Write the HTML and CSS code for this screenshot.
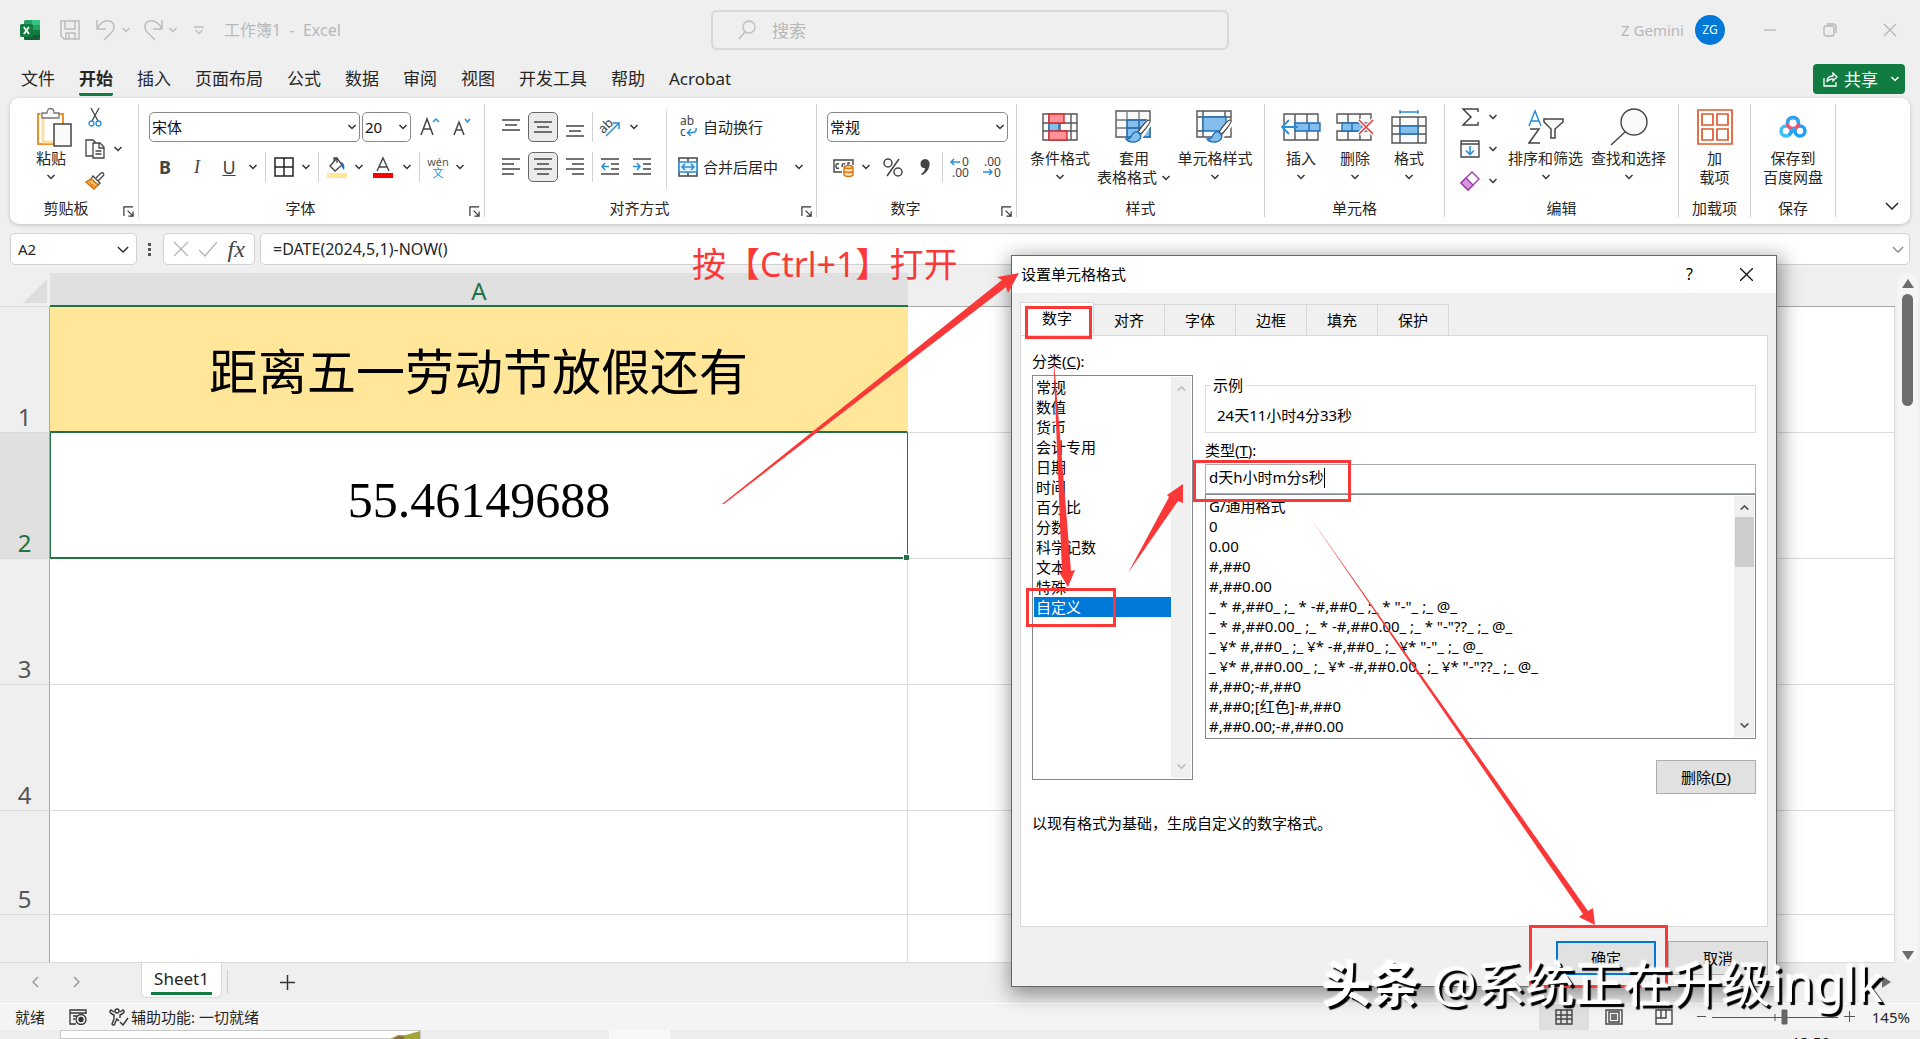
FILE: index.html
```html
<!DOCTYPE html>
<html lang="zh-CN">
<head>
<meta charset="utf-8">
<title>工作簿1 - Excel</title>
<link rel="stylesheet" href="styles.css">
</head>
<body>
<svg class="sprite" aria-hidden="true">
  <symbol id="chev" viewBox="0 0 10 6"><path d="M1.500 1 5 4.500 8.500 1" fill="none" stroke="currentColor" stroke-width="1.500"/></symbol>
  <symbol id="chev-lg" viewBox="0 0 14 8"><path d="M1 1l6 6 6-6" fill="none" stroke="currentColor" stroke-width="1.500"/></symbol>
  <symbol id="launch" viewBox="0 0 12 12"><path d="M1 11V1h10M5 5l6 6M11 6v5H6" fill="none" stroke="#333" stroke-width="1.300"/></symbol>
  <symbol id="brush" viewBox="0 0 30 28"><path d="M27 3c1 1-1 5-9 14l-3-2C21 6 25 2 27 3z" fill="#fff" stroke="#444" stroke-width="1.300"/><path d="M15 15c-4-1-6 2-7 5-1 2-3 2-5 2 3 4 14 5 15-3z" fill="#83beec" stroke="#1e6fb8" stroke-width="1.300"/></symbol>
</svg>
<div class="app">
  <header class="titlebar">
    <div class="quick">
      <svg width="20" height="20" viewBox="0 0 20 20"><rect x="4" width="16" height="20" rx="1.500" fill="#21a366"/><path d="M12 0h6.500A1.500 1.500 0 0 1 20 1.500V5h-8z" fill="#33c481"/><path d="M4 10h16v8.500a1.500 1.500 0 0 1-1.500 1.500h-13A1.500 1.500 0 0 1 4 18.500z" fill="#185c37"/><path d="M12 10h8v5h-8z" fill="#107c41"/><rect y="4" width="13" height="13" rx="1.500" fill="#107c41"/><path d="M3.800 7l5.200 7M9 7l-5.200 7" stroke="#fff" stroke-width="1.800"/></svg>
      <button class="plain q-save" aria-label="保存"><svg width="20" height="20" viewBox="0 0 20 20" fill="none" stroke="#bdbdbd" stroke-width="1.500"><path d="M1 1h18v18H4l-3-3zM5 1v8h10V1M6 19v-6h9v6M9 14v5"/></svg></button>
      <button class="plain" aria-label="撤消"><svg width="20" height="22" viewBox="0 0 20 22" fill="none" stroke="#bdbdbd" stroke-width="1.500"><path d="M1 1v9h9M1 10C4 4 9 1 14 2c5 2 5 8 2 11l-8 8"/></svg></button>
      <svg class="chev" width="10" height="6"><use href="#chev"/></svg>
      <button class="plain q-redo" aria-label="恢复"><svg width="20" height="22" viewBox="0 0 20 22" fill="none" stroke="#bdbdbd" stroke-width="1.500"><path d="M19 1v9h-9M19 10C16 4 11 1 6 2c-5 2-5 8-2 11l8 8"/></svg></button>
      <svg class="chev" width="10" height="6"><use href="#chev"/></svg>
      <svg class="q-more" width="10" height="9" viewBox="0 0 10 9" fill="none" stroke="#bdbdbd" stroke-width="1.300"><path d="M0 1h10M1.500 4 5 7.500 8.500 4"/></svg>
      <h1>工作簿1 &nbsp;- &nbsp;Excel</h1>
    </div>
    <label class="search"><svg width="18" height="20" viewBox="0 0 18 20" fill="none" stroke="#bdbdbd" stroke-width="1.300"><circle cx="11" cy="7" r="6"/><path d="M7 12l-6 7"/></svg><input type="text" placeholder="搜索" aria-label="搜索"></label>
    <div class="account">
      <span class="user">Z Gemini</span><span class="avatar">ZG</span>
      <button class="plain win" aria-label="最小化"><svg width="14" height="14" viewBox="0 0 14 14"><path d="M1 7h12" stroke="#b5b5b5" stroke-width="1.300"/></svg></button>
      <button class="plain win" aria-label="还原"><svg width="14" height="14" viewBox="0 0 14 14" fill="none" stroke="#b5b5b5" stroke-width="1.300"><rect x="1" y="3" width="10" height="10" rx="2"/><path d="M4 1h6a3 3 0 0 1 3 3v6"/></svg></button>
      <button class="plain win" aria-label="关闭"><svg width="14" height="14" viewBox="0 0 14 14" stroke="#b5b5b5" stroke-width="1.300"><path d="M1 1l12 12M13 1L1 13"/></svg></button>
    </div>
  </header>

  <nav class="menu">
    <a href="#">文件</a><a href="#" class="current">开始</a><a href="#">插入</a><a href="#">页面布局</a><a href="#">公式</a><a href="#">数据</a><a href="#">审阅</a><a href="#">视图</a><a href="#">开发工具</a><a href="#">帮助</a><a href="#">Acrobat</a>
    <button class="share"><svg width="15" height="15" viewBox="0 0 15 15" fill="none" stroke="#fff" stroke-width="1.300"><path d="M1 6v8h12V10M4 10c0-4 2-6 6-6V1l4 4-4 4V7C7 7 5 8 4 10z"/></svg>共享<svg class="chev" width="10" height="6"><use href="#chev"/></svg></button>
  </nav>

  <section class="ribbon">
    <div class="group g-clip">
      <div class="body">
        <button class="big b-paste"><span class="ico"><svg width="42" height="40" viewBox="-6 0 42 40"><rect x="2" y="7" width="25" height="30" fill="#fff" stroke="#e8912d" stroke-width="2"/><path d="M4 8h3v27h11" fill="none" stroke="#fbe0a8" stroke-width="3"/><path d="M6 11V6h5c0-6 7-6 7 0h5v5z" fill="#fafafa" stroke="#777" stroke-width="1.300"/><rect x="18" y="17" width="17" height="22" fill="#fafafa" stroke="#444" stroke-width="1.500"/></svg></span>粘贴<svg class="chev" width="10" height="6"><use href="#chev"/></svg></button>
        <div class="tools">
          <div class="row"><button class="ib" aria-label="剪切"><svg width="14" height="20" viewBox="0 0 14 20" fill="none" stroke="#444" stroke-width="1.300"><path d="M3 1l7 13M11 1L4 14"/><g stroke="#2b8fd6"><circle cx="3.500" cy="16.500" r="2.500"/><circle cx="10.500" cy="16.500" r="2.500"/></g></svg></button></div>
          <div class="row"><button class="ib" aria-label="复制"><svg width="20" height="20" viewBox="0 0 20 20" fill="#fff" stroke="#444" stroke-width="1.300"><path d="M8 17H1V1h7l3 3"/><path d="M8 4h7l4 4v11H8zM14 4v5h5M10.500 12h6M10.500 15h6"/></svg></button><svg class="chev" width="10" height="6"><use href="#chev"/></svg></div>
          <div class="row"><button class="ib" aria-label="格式刷"><svg width="20" height="18" viewBox="0 0 20 18"><path d="M11 6l5-5c2-1 4 1 2 3l-5 5" fill="#fff" stroke="#444" stroke-width="1.300"/><path d="M8 4l7 7-2 2-7-6z" fill="#fff" stroke="#444" stroke-width="1.300"/><path d="M6 7L1 10l8 7 4-4z" fill="#f9c16b" stroke="#d9730d" stroke-width="1.500"/><path d="M4 9l5 8M7 12l4 3" stroke="#d9730d"/></svg></button></div>
        </div>
      </div>
      <div class="foot"><span>剪贴板</span><svg width="11" height="11"><use href="#launch"/></svg></div>
    </div>

    <div class="group g-font">
      <div class="body two">
        <div class="row">
          <label class="combo c-font"><select aria-label="字体"><option>宋体</option></select><svg class="chev" width="10" height="6"><use href="#chev"/></svg></label>
          <label class="combo c-size"><select aria-label="字号"><option>20</option></select><svg class="chev" width="10" height="6"><use href="#chev"/></svg></label>
          <button class="ib" aria-label="增大字号"><svg width="20" height="20" viewBox="0 0 20 20" fill="none" stroke="#444" stroke-width="1.500"><path d="M1 18L7 2l6 16M3 12h8"/><path d="M13 5l3-3 3 3" stroke="#2b8fd6"/></svg></button>
          <button class="ib" aria-label="减小字号"><svg width="18" height="20" viewBox="0 0 18 20" fill="none" stroke="#444" stroke-width="1.500"><path d="M1 18L6 5l5 13M3 13h6"/><path d="M12 2l2.500 3L17 2" stroke="#2b8fd6"/></svg></button>
        </div>
        <div class="row">
          <button class="ib tx"><b>B</b></button><button class="ib tx"><i>I</i></button><button class="ib tx"><u>U</u></button><svg class="chev" width="10" height="6"><use href="#chev"/></svg>
          <span class="sep"></span>
          <button class="ib n" aria-label="边框"><svg width="20" height="20" viewBox="0 0 20 20" fill="none" stroke="#222" stroke-width="1.500"><path d="M1 1h18v18H1zM10 1v18M1 10h18"/></svg></button><svg class="chev" width="10" height="6"><use href="#chev"/></svg>
          <span class="sep"></span>
          <button class="ib n" aria-label="填充颜色"><svg width="22" height="21" viewBox="0 0 22 21"><path d="M4 9l7-8 5 7-7 6zM8 5V1h3v5" fill="#fff" stroke="#444" stroke-width="1.300"/><path d="M15 5c3 1 4 4 3 8-2-2-3-4-3-8z" fill="#1e6fb8"/><rect x="1" y="16" width="20" height="5" fill="#ffe699"/></svg></button><svg class="chev" width="10" height="6"><use href="#chev"/></svg>
          <button class="ib" aria-label="字体颜色"><svg width="20" height="21" viewBox="0 0 20 21"><path d="M4 14L10 1l6 13M6 10h8" fill="none" stroke="#444" stroke-width="1.400"/><rect y="16" width="20" height="5" fill="red"/></svg></button><svg class="chev" width="10" height="6"><use href="#chev"/></svg>
          <span class="sep"></span>
          <button class="ib n wen">wén<span>文</span></button><svg class="chev" width="10" height="6"><use href="#chev"/></svg>
        </div>
      </div>
      <div class="foot"><span>字体</span><svg width="11" height="11"><use href="#launch"/></svg></div>
    </div>

    <div class="group g-align">
      <div class="body">
        <div class="two left">
          <div class="row">
            <button class="ib" aria-label="顶端对齐"><svg width="18" height="20" viewBox="0 0 18 20" stroke="#444" stroke-width="1.500"><path d="M0 3h18M3 8h12M0 13h18"/></svg></button>
            <button class="ib on" aria-label="垂直居中"><svg width="18" height="20" viewBox="0 0 18 20" stroke="#444" stroke-width="1.500"><path d="M0 5h18M3 10h12M0 15h18"/></svg></button>
            <button class="ib" aria-label="底端对齐"><svg width="18" height="20" viewBox="0 0 18 20" stroke="#444" stroke-width="1.500"><path d="M0 9h18M3 14h12M0 19h18"/></svg></button>
            <span class="sep thin"></span>
            <button class="ib" aria-label="方向"><svg width="22" height="20" viewBox="0 0 22 20" fill="none"><text x="0" y="15" font-size="13" fill="#444" transform="rotate(-45 5 11)">ab</text><path d="M7 19L20 6M14 6h6v6" stroke="#2b8fd6" stroke-width="1.500"/></svg></button><svg class="chev" width="10" height="6"><use href="#chev"/></svg>
          </div>
          <div class="row">
            <button class="ib" aria-label="左对齐"><svg width="18" height="18" viewBox="0 0 18 18" stroke="#444" stroke-width="1.500"><path d="M0 1h18M0 6h12M0 11h18M0 16h12"/></svg></button>
            <button class="ib on" aria-label="居中"><svg width="18" height="18" viewBox="0 0 18 18" stroke="#444" stroke-width="1.500"><path d="M0 1h18M3 6h12M0 11h18M3 16h12"/></svg></button>
            <button class="ib" aria-label="右对齐"><svg width="18" height="18" viewBox="0 0 18 18" stroke="#444" stroke-width="1.500"><path d="M0 1h18M6 6h12M0 11h18M6 16h12"/></svg></button>
            <span class="sep thin"></span>
            <button class="ib" aria-label="减少缩进量"><svg width="18" height="18" viewBox="0 0 18 18" fill="none" stroke="#444" stroke-width="1.500"><path d="M0 1h18M10 6h8M10 11h8M0 16h18"/><path d="M8 8.500H1M4 5L1 8.500 4 12" stroke="#2b8fd6"/></svg></button>
            <button class="ib" aria-label="增加缩进量"><svg width="18" height="18" viewBox="0 0 18 18" fill="none" stroke="#444" stroke-width="1.500"><path d="M0 1h18M10 6h8M10 11h8M0 16h18"/><path d="M0 8.500h7M4 5l3 3.500L4 12" stroke="#2b8fd6"/></svg></button>
          </div>
        </div>
        <span class="sep tall"></span>
        <div class="two">
          <button class="wide"><svg width="20" height="20" viewBox="0 0 20 20" fill="none"><text x="2" y="8" font-size="12" fill="#444">ab</text><text x="2" y="19" font-size="12" fill="#444">c</text><path d="M18 11c1 4-2 5-8 5M13 12l-3.500 4 3.500 3" stroke="#2b8fd6" stroke-width="1.500"/></svg>自动换行</button>
          <button class="wide"><svg width="20" height="20" viewBox="0 0 20 20" fill="none" stroke="#444" stroke-width="1.500"><path d="M1 1h18v18H1zM10 1v4M10 15v4"/><path d="M1 5h18v10H1z" fill="#e5f2fb" stroke="#2b8fd6"/><path d="M4 10h12M7 7l-3 3 3 3M13 7l3 3-3 3" stroke="#2b8fd6"/></svg>合并后居中<svg class="chev" width="10" height="6"><use href="#chev"/></svg></button>
        </div>
      </div>
      <div class="foot"><span>对齐方式</span><svg width="11" height="11"><use href="#launch"/></svg></div>
    </div>

    <div class="group g-num">
      <div class="body two">
        <div class="row"><label class="combo c-num"><select aria-label="数字格式"><option>常规</option></select><svg class="chev" width="10" height="6"><use href="#chev"/></svg></label></div>
        <div class="row">
          <button class="ib" aria-label="会计数字格式"><svg width="21" height="19" viewBox="0 0 21 19" fill="none" stroke="#444" stroke-width="1.400"><path d="M9 14H1V2h19v5M6 6c-2-1-3 0-3 2s1 3 3 2M12 6c-2-1-3 0-3 3M15 7V5h2"/><path d="M11 9v8c1 2 8 2 9 0V9c-1-2-8-2-9 0c1 2 8 2 9 0M11 13c1 2 8 2 9 0" fill="#fde3bd" stroke="#d9730d"/></svg></button><svg class="chev" width="10" height="6"><use href="#chev"/></svg>
          <button class="ib pct" aria-label="百分比样式"><svg width="20" height="19" viewBox="0 0 20 19" fill="none" stroke="#444" stroke-width="1.500"><circle cx="5" cy="5" r="4"/><circle cx="15" cy="14" r="4"/><path d="M16 1L4 18"/></svg></button>
          <button class="ib" aria-label="千位分隔样式"><svg width="10" height="18" viewBox="0 0 10 18"><path d="M5 1c7 0 6 12-3 16l-1-1c3-2 4-4 4-6C-1 11-1 1 5 1z" fill="#444"/></svg></button>
          <span class="sep thin"></span>
          <button class="ib" aria-label="增加小数位数"><svg width="20" height="21" viewBox="0 0 20 21"><text x="12" y="9" font-size="12" fill="#444">0</text><text x="2" y="20" font-size="12" fill="#444">.00</text><path d="M10 5H1M4 2L1 5l3 3" fill="none" stroke="#2b8fd6" stroke-width="1.500"/></svg></button>
          <button class="ib" aria-label="减少小数位数"><svg width="20" height="21" viewBox="0 0 20 21"><text x="2" y="9" font-size="12" fill="#444">.00</text><text x="12" y="20" font-size="12" fill="#444">0</text><path d="M1 15h9M7 12l3 3-3 3" fill="none" stroke="#2b8fd6" stroke-width="1.500"/></svg></button>
        </div>
      </div>
      <div class="foot"><span>数字</span><svg width="11" height="11"><use href="#launch"/></svg></div>
    </div>

    <div class="group g-style">
      <div class="body">
        <button class="big"><span class="ico"><svg width="36" height="28" viewBox="0 0 36 28" fill="#fafafa" stroke="#555" stroke-width="1.400"><path d="M1 1h34v26H1zM7 1v26M29 1v26M18 1v26M1 10h34M1 18h34"/><path d="M7 10h10v8H7z" fill="#83beec" stroke="#1e6fb8"/><path d="M7 1h15v9H7zM7 18h18v9H7z" fill="#ff9199" stroke="#d92b2b"/></svg></span>条件格式<svg class="chev" width="10" height="6"><use href="#chev"/></svg></button>
        <button class="big"><span class="ico"><svg width="38" height="34" viewBox="0 0 38 34"><path d="M1 1h34v26H1z" fill="#fafafa" stroke="#555" stroke-width="1.400"/><path d="M12 10h23v17H12z" fill="#83beec"/><path d="M12 1v26M24 1v26M1 10h34M1 18h34" stroke="#777" stroke-width="1.300"/><path d="M12 10h23M12 10v17h23V10M12 18h23M24 10v17" fill="none" stroke="#1e6fb8" stroke-width="1.300"/><path d="M36 10L24 27l-6 6" stroke="#fff" stroke-width="7"/><use href="#brush" x="8" y="7" width="30" height="28"/></svg></span>套用<span class="line">表格格式 <svg class="chev" width="10" height="6"><use href="#chev"/></svg></span></button>
        <button class="big wider"><span class="ico"><svg width="38" height="34" viewBox="0 0 38 34"><path d="M1 1h34v26H1zM7 1v26M29 1v6M1 7h34M1 21h7" fill="#fafafa" stroke="#555" stroke-width="1.400"/><path d="M7 7h23v14H7z" fill="#83beec" stroke="#1e6fb8" stroke-width="1.400"/><path d="M36 10L24 27l-6 6" stroke="#fff" stroke-width="7"/><use href="#brush" x="8" y="7" width="30" height="28"/></svg></span>单元格样式<svg class="chev" width="10" height="6"><use href="#chev"/></svg></button>
      </div>
      <div class="foot"><span>样式</span></div>
    </div>

    <div class="group g-cell">
      <div class="body">
        <button class="big"><span class="ico"><svg width="40" height="28" viewBox="0 0 40 28" fill="#fafafa" stroke="#555" stroke-width="1.400"><path d="M3 1h34v26H3zM14 1v26M26 1v26"/><path d="M14 10h25v8H14zM28 10v8" fill="#83beec" stroke="#1e6fb8"/><path d="M17 14H1M8 7l-7 7 7 7" fill="none" stroke="#2b8fd6" stroke-width="1.800"/></svg></span>插入<svg class="chev" width="10" height="6"><use href="#chev"/></svg></button>
        <button class="big"><span class="ico"><svg width="38" height="28" viewBox="0 0 38 28" fill="#fafafa" stroke="#555" stroke-width="1.400"><path d="M1 10V1h34v9H1zM1 18h34v9H1zM12 1v9M24 1v9M12 18v9M24 18v9"/><path d="M6 10h20v8H6zM16 10v8" fill="#83beec" stroke="#1e6fb8"/><path d="M23 7l14 14M37 7L23 21" stroke="#fff" stroke-width="4"/><path d="M23 7l14 14M37 7L23 21" stroke="#e8373e" stroke-width="1.600"/></svg></span>删除<svg class="chev" width="10" height="6"><use href="#chev"/></svg></button>
        <button class="big"><span class="ico tallico"><svg width="36" height="36" viewBox="0 0 36 36" fill="#fafafa" stroke="#555" stroke-width="1.400"><path d="M1 8h34v26H1zM9 8v26M27 8v26M1 17h34M1 25h34"/><path d="M9 17h18v8H9z" fill="#83beec" stroke="#1e6fb8"/><path d="M9 3h18M9 1v4M27 1v4" stroke="#2b8fd6"/></svg></span>格式<svg class="chev" width="10" height="6"><use href="#chev"/></svg></button>
      </div>
      <div class="foot"><span>单元格</span></div>
    </div>

    <div class="group g-edit">
      <div class="body">
        <div class="tools">
          <div class="row"><button class="ib" aria-label="自动求和"><svg width="18" height="18" viewBox="0 0 18 18" fill="none" stroke="#444" stroke-width="1.500"><path d="M17 4V1H2l8 8-8 8h15v-3"/></svg></button><svg class="chev" width="10" height="6"><use href="#chev"/></svg></div>
          <div class="row"><button class="ib" aria-label="填充"><svg width="20" height="18" viewBox="0 0 20 18" fill="#fafafa" stroke="#444" stroke-width="1.400"><path d="M1 1h18v16H1zM1 4h18"/><path d="M10 6v8M6 10.500l4 4 4-4" fill="none" stroke="#2b8fd6" stroke-width="1.600"/></svg></button><svg class="chev" width="10" height="6"><use href="#chev"/></svg></div>
          <div class="row"><button class="ib" aria-label="清除"><svg width="20" height="20" viewBox="0 0 20 20" fill="#fff" stroke="#a03bab" stroke-width="1.400"><path d="M1 12L12 1l7 7L8 19z"/><path d="M1 12l5-5 7 7-5 5z" fill="#d896dd"/></svg></button><svg class="chev" width="10" height="6"><use href="#chev"/></svg></div>
        </div>
        <button class="big wider"><span class="ico"><svg width="36" height="36" viewBox="0 0 36 36" fill="none" stroke="#444" stroke-width="1.500"><path d="M1 17L7 2l6 15M3 12h8" stroke="#2b8fd6"/><path d="M2 20h9L1 34h11"/><path d="M16 10h19v3l-8 7v9h-4v-9l-7-7z" fill="#fafafa"/></svg></span>排序和筛选<svg class="chev" width="10" height="6"><use href="#chev"/></svg></button>
        <button class="big wider"><span class="ico"><svg width="38" height="38" viewBox="0 0 38 38" fill="none" stroke="#444" stroke-width="1.400"><circle cx="24" cy="14" r="13" fill="#fafafa"/><path d="M15 24L1 37"/></svg></span>查找和选择<svg class="chev" width="10" height="6"><use href="#chev"/></svg></button>
      </div>
      <div class="foot"><span>编辑</span></div>
    </div>

    <div class="group g-add">
      <div class="body"><button class="big"><span class="ico"><svg width="36" height="36" viewBox="0 0 36 36" fill="none" stroke="#dd5a2b" stroke-width="1.700"><path d="M1 1h34v34H1zM5 5h11v11H5zM20 5h11v11H20zM5 20h11v11H5zM20 20h11v11H20z"/></svg></span>加<span class="line">载项</span></button></div>
      <div class="foot"><span>加载项</span></div>
    </div>
    <div class="group g-save">
      <div class="body"><button class="big"><span class="ico"><svg width="28" height="24" viewBox="0 0 28 24" fill="none" stroke-width="3.500"><circle cx="7" cy="16" r="5" stroke="#3cc0f5"/><circle cx="21" cy="16" r="5" stroke="#1fa0f5"/><circle cx="14" cy="8" r="5.500" stroke="#f5506e"/><path d="M8.500 8a5.500 5.500 0 0 1 11 0M10 20l6-7" stroke="#2aa8f5"/></svg></span>保存到<span class="line">百度网盘</span></button></div>
      <div class="foot"><span>保存</span></div>
    </div>
    <button class="plain collapse" aria-label="折叠功能区"><svg width="14" height="8"><use href="#chev-lg"/></svg></button>
  </section>

  <section class="formulabar">
    <div class="box namebox"><input type="text" value="A2" aria-label="名称框"><svg width="12" height="7"><use href="#chev-lg"/></svg></div>
    <svg class="dots" width="4" height="14" viewBox="0 0 4 14" fill="#555"><path d="M0 0h3v3H0zM0 5h3v3H0zM0 10h3v3H0z"/></svg>
    <div class="box fxbox">
      <button class="plain" aria-label="取消输入"><svg width="16" height="16" viewBox="0 0 16 16" stroke="#b5b5b5" stroke-width="1.300"><path d="M1 1l14 14M15 1L1 15"/></svg></button>
      <button class="plain" aria-label="输入"><svg width="20" height="16" viewBox="0 0 20 16" fill="none" stroke="#b5b5b5" stroke-width="1.300"><path d="M1 9l6 6L19 1"/></svg></button>
      <button class="plain fx">fx</button>
    </div>
    <div class="box formula"><input type="text" value="=DATE(2024,5,1)-NOW()" aria-label="编辑栏"><svg width="12" height="7"><use href="#chev-lg"/></svg></div>
  </section>

  <main class="sheetarea">
    <table class="sheet">
      <thead><tr><th class="corner"><svg width="26" height="26" viewBox="0 0 26 26"><path d="M25 1v24H1z" fill="#dedede"/></svg></th><th class="col">A</th><th></th></tr></thead>
      <tbody>
        <tr class="tallrow"><th>1</th><td class="head">距离五一劳动节放假还有</td><td></td></tr>
        <tr class="tallrow"><th class="sel">2</th><td class="active">55.46149688</td><td></td></tr>
        <tr class="tallrow"><th>3</th><td></td><td></td></tr>
        <tr class="tallrow"><th>4</th><td></td><td></td></tr>
        <tr class="midrow"><th>5</th><td></td><td></td></tr>
        <tr class="last"><th></th><td></td><td></td></tr>
      </tbody>
    </table>
    <div class="vscroll"><svg width="12" height="9" viewBox="0 0 12 9"><path d="M6 0l6 9H0z" fill="#6e6e6e"/></svg><span class="thumb"></span><svg class="down" width="12" height="9" viewBox="0 0 12 9"><path d="M0 0h12L6 9z" fill="#6e6e6e"/></svg></div>
  </main>

  <footer>
    <div class="tabs">
      <button class="plain nav" aria-label="上一张"><svg width="7" height="12" viewBox="0 0 7 12" fill="none" stroke="#999" stroke-width="1.500"><path d="M6 1L1 6l5 5"/></svg></button>
      <button class="plain nav" aria-label="下一张"><svg width="7" height="12" viewBox="0 0 7 12" fill="none" stroke="#999" stroke-width="1.500"><path d="M1 1l5 5-5 5"/></svg></button>
      <button class="sheettab"><span>Sheet1</span></button>
      <span class="tabsep"></span>
      <button class="plain add" aria-label="新工作表"><svg width="15" height="15" viewBox="0 0 15 15" stroke="#333" stroke-width="1.500"><path d="M7.500 0v15M0 7.500h15"/></svg></button>
      <svg class="hright" width="9" height="12" viewBox="0 0 9 12"><path d="M0 0l9 6-9 6z" fill="#6e6e6e"/></svg>
    </div>
    <div class="status">
      <span>就绪</span>
      <svg class="macro" width="18" height="16" viewBox="0 0 18 16" fill="none" stroke="#333" stroke-width="1.300"><path d="M7 15H1V1h16v4M1 4h16M4 7h4M4 10h2"/><circle cx="12" cy="10.500" r="5"/><circle cx="12" cy="10.500" r="2" fill="#333"/></svg>
      <svg class="acc" width="20" height="18" viewBox="0 0 20 18" fill="none" stroke="#333" stroke-width="1.400"><circle cx="8" cy="3" r="2"/><path d="M5 4L2 2C0 3 1 5 3 6l2 1v4l-2 5c1 2 3 1 3-1l2-4 2 2M11 4l3-2c2 1 1 3-1 4l-2 1v3M11 14l3 3 5-7"/></svg>
      <span>辅助功能: 一切就绪</span>
      <div class="zoom">
        <button class="view on" aria-label="普通"><svg width="18" height="16" viewBox="0 0 18 16" fill="none" stroke="#444" stroke-width="1.400"><path d="M1 1h16v14H1zM6 1v14M12 1v14M1 6h16M1 10h16"/></svg></button>
        <button class="view" aria-label="页面布局"><svg width="18" height="16" viewBox="0 0 18 16" fill="none" stroke="#444" stroke-width="1.400"><path d="M1 1h16v14H1zM4 3h10v10H4zM6 6h6M6 8h6M6 10h6"/></svg></button>
        <button class="view" aria-label="分页预览"><svg width="18" height="16" viewBox="0 0 18 16" fill="none" stroke="#444" stroke-width="1.400"><path d="M1 1h16v14H1zM1 9h10V1M6 1v8"/></svg></button>
        <svg class="slider" width="158" height="16" viewBox="0 0 158 16" fill="none" stroke="#555"><path d="M0 7.500h9M15 8.500h126M78 5v7M147 7.500h11M152.500 2v11"/><path d="M85 1h5v14h-5z" fill="#666" stroke="#666"/></svg>
        <span>145%</span>
      </div>
    </div>
    <div class="taskbar"><span class="preview"><svg width="30" height="8" viewBox="0 0 30 8"><path d="M0 8l8-4 8 0 14-4v8z" fill="#a3a53c"/><path d="M3 8l6-3 6 1-2 2z" fill="#8a6a4a"/></svg></span><span class="task"></span><span class="clock">13:59</span></div>
  </footer>

  <div class="dialog" role="dialog" aria-label="设置单元格格式">
    <div class="dtitle"><span>设置单元格格式</span><button class="plain help">?</button><button class="plain" aria-label="关闭"><svg width="13" height="13" viewBox="0 0 13 13" stroke="#111" stroke-width="1.300"><path d="M0 0l13 13M13 0L0 13"/></svg></button></div>
    <div class="dbody">
      <div class="dtabs"><button class="cur">数字</button><button>对齐</button><button>字体</button><button>边框</button><button>填充</button><button>保护</button></div>
      <div class="panel">
        <div class="cols">
          <div class="cat">
            <span class="lbl" id="cat">分类(<u>C</u>):</span>
            <div class="listbox">
              <ul role="listbox" aria-labelledby="cat"><li>常规</li><li>数值</li><li>货币</li><li>会计专用</li><li>日期</li><li>时间</li><li>百分比</li><li>分数</li><li>科学记数</li><li>文本</li><li>特殊</li><li class="sel">自定义</li></ul>
              <div class="sb off"><svg class="up" width="11" height="7"><use href="#chev"/></svg><svg width="11" height="7"><use href="#chev"/></svg></div>
            </div>
          </div>
          <div class="detail">
            <fieldset><legend>示例</legend>24天11小时4分33秒</fieldset>
            <label class="lbl" for="type">类型(<u>T</u>):</label>
            <div class="typebox"><input type="text" id="type" value="d天h小时m分s秒"></div>
            <div class="listbox formats">
              <ul role="listbox" aria-label="类型"><li>G/通用格式</li><li>0</li><li>0.00</li><li>#,##0</li><li>#,##0.00</li><li>_ * #,##0_ ;_ * -#,##0_ ;_ * "-"_ ;_ @_ </li><li>_ * #,##0.00_ ;_ * -#,##0.00_ ;_ * "-"??_ ;_ @_ </li><li>_ ¥* #,##0_ ;_ ¥* -#,##0_ ;_ ¥* "-"_ ;_ @_ </li><li>_ ¥* #,##0.00_ ;_ ¥* -#,##0.00_ ;_ ¥* "-"??_ ;_ @_ </li><li>#,##0;-#,##0</li><li>#,##0;[红色]-#,##0</li><li>#,##0.00;-#,##0.00</li></ul>
              <div class="sb"><svg class="up" width="11" height="7"><use href="#chev"/></svg><span class="sbthumb"></span><svg width="11" height="7"><use href="#chev"/></svg></div>
            </div>
            <button class="btn del">删除(<u>D</u>)</button>
          </div>
        </div>
        <p>以现有格式为基础，生成自定义的数字格式。</p>
      </div>
      <div class="actions"><button class="btn ok">确定</button><button class="btn">取消</button></div>
    </div>
  </div>

  <div class="note">按【Ctrl+1】打开</div>
  <svg class="marks" width="1920" height="1039" viewBox="0 0 1920 1039" fill="#fb3838" aria-hidden="true">
    <rect x="1324" y="468" width="1" height="20" fill="#000"/>
    <path d="M722 504L1002 280L997 277L1019 273L1008 293L1006 287L724 504z"/>
    <path d="M1053 349L1062 572L1059 572L1068 587L1075 570L1071 571z"/>
    <path d="M1128 573L1169 497L1167 495L1183 484L1183 503L1178 501z"/>
    <path d="M1309 516L1588 911L1593 908L1595 925L1579 917L1583 914z"/>
    <g fill="none" stroke="#fb3838" stroke-width="3"><rect x="1026.500" y="307.500" width="64" height="30"/><rect x="1027.500" y="589.500" width="87" height="36"/><rect x="1194.500" y="461.500" width="155" height="39"/><rect x="1530.500" y="926.500" width="136" height="60"/></g>
  </svg>
  <div class="watermark"><b>头条</b> @系统正在升级inglk</div>
</div>
</body>
</html>
```
FILE: styles.css
```css
* { box-sizing: border-box; }
body {
  margin: 0;
  background: #efefef;
  color: #262626;
  font: 15px/19px "Noto Sans", "Noto Sans CJK SC", sans-serif;
}
button, input, select { font: inherit; color: inherit; margin: 0; padding: 0; border: 0; background: none; }
input, select { outline: 0; min-width: 0; appearance: none; }
svg { display: block; flex: none; }
ul { margin: 0; padding: 0; list-style: none; }
.sprite { position: absolute; width: 0; height: 0; }
.app { position: relative; min-height: 100vh; display: flex; flex-direction: column; overflow: hidden; }
.plain { display: flex; align-items: center; justify-content: center; }

.titlebar { height: 60px; display: grid; grid-template-columns: 1fr 518px 1fr; align-items: center; color: #b8b8b8; font-size: 16px; }
.quick { display: flex; align-items: center; padding-left: 20px; }
.q-save { margin: 0 16px 0 20px; }
.quick .chev { margin-left: 5px; }
.q-redo { margin-left: 12px; }
.q-more { margin: 0 20px 0 16px; }
.titlebar h1 { margin: 0; font-size: 16px; font-weight: 400; white-space: nowrap; }
.search { height: 40px; border: 2px solid #d8d8d8; border-radius: 6px; display: flex; align-items: center; gap: 16px; padding-left: 25px; margin-left: 10px; margin-right: -10px; }
.search input { flex: 1; font-size: 17px; }
.search input::placeholder { color: #b8b8b8; opacity: 1; }
.account { display: flex; align-items: center; justify-content: flex-end; }
.user { font-size: 15px; }
.avatar { width: 30px; height: 30px; border-radius: 50%; background: #0078d7; color: #fff; font-size: 12px; line-height: 30px; text-align: center; margin: 0 15px 0 11px; }
.win { width: 60px; height: 40px; }

.menu { height: 38px; display: flex; align-items: center; padding: 0 15px 0 9px; }
.menu a { color: inherit; text-decoration: none; font-size: 17px; line-height: 28px; margin: 2px 12px 0; border-bottom: 3px solid transparent; }
.menu .current { font-weight: 700; border-color: #107c41; border-radius: 2px; }
.share { margin-left: auto; width: 92px; height: 30px; border-radius: 4px; background: #107c41; color: #fff; font-size: 17px; display: flex; align-items: center; gap: 6px; padding-left: 10px; }
.share .chev { color: #fff; margin-left: 6px; }

.ribbon { margin: 0 10px; height: 126px; border-radius: 9px; background: #fff; box-shadow: 0 1px 4px #0003; display: flex; }
.group { margin: 6px 0 7px; border-right: 1px solid #d1d1d1; display: flex; flex-direction: column; flex: none; }
.body { flex: 1; display: flex; align-items: flex-start; }
.foot { position: relative; height: 17px; line-height: 17px; text-align: center; }
.foot svg { position: absolute; right: 4px; bottom: 0; }
.g-clip { width: 129px; }
.g-font { width: 346px; }
.g-align { width: 332px; }
.g-num { width: 200px; }
.g-style { width: 248px; }
.g-cell { width: 180px; }
.g-edit { width: 234px; }
.g-add { width: 72px; }
.g-save { width: 85px; }
.g-clip .foot { padding-right: 16px; }
.g-font .foot, .g-align .foot, .g-num .foot { padding-right: 22px; }
.chev { color: #333; }
.quick .chev { color: #bdbdbd; }
.two { display: flex; flex-direction: column; align-items: flex-start; gap: 10px; padding: 8px 0 0 10px; }
.row { display: flex; align-items: center; height: 30px; }
.tools { margin-top: -3px; }
.tools .row { height: 32px; }
.g-edit .tools { padding: 0 6px 0 9px; }
.tools .chev { margin-left: 2px; }
.ib { width: 32px; height: 30px; display: flex; align-items: center; justify-content: center; flex: none; }
.ib svg, .wide svg { overflow: visible; }
.ib.n { width: 28px; }
.ib.on { border: 1px solid #666; border-radius: 5px; background: #ebebeb; width: 30px; margin: 0 1px; }
.tx { font-size: 18px; color: #444; }
.tx i { font-family: "Liberation Serif", serif; }
.two .chev { margin: 0 3px; }
.sep { width: 1px; height: 30px; background: #d1d1d1; margin: 0 4px; flex: none; }
.sep.thin { margin: 0 1px; }
.sep.tall { height: 78px; margin: 7px 1px 0 8px; }
.wen { flex-direction: column; font-size: 11px; line-height: 11px; color: #555; }
.wen span { color: #2b8fd6; }
.combo { height: 30px; border: 1px solid #888; border-radius: 5px; display: flex; align-items: center; }
.combo select { flex: 1; height: 28px; padding-left: 2px; color: #111; }
.two .combo .chev { margin: 0 2px; }
.c-font { width: 211px; margin-right: 2px; }
.c-size { width: 49px; margin-right: 3px; }
.c-num { width: 181px; }
.pct { margin-left: 4px; }
.g-num .chev { margin: 0 2px; }
.wide { height: 30px; display: flex; align-items: center; gap: 5px; white-space: nowrap; }
.two .wide .chev { margin: 0 0 0 11px; }
.big { display: flex; flex-direction: column; align-items: center; white-space: nowrap; width: 54px; }
.big .ico { height: 45px; display: flex; align-items: center; justify-content: center; }
.big > .chev { margin-top: 6px; }
.line { display: flex; align-items: center; gap: 4px; }
.b-paste { width: 56px; margin-left: 13px; }
.g-style .big { width: 74px; }
.g-style .body { padding-left: 6px; }
.g-style .big.wider { width: 88px; }
.g-cell .body { padding-left: 9px; }
.g-edit .wider { width: 83px; }
.g-add .big, .g-save .big { width: 100%; }
.collapse { margin: 100px 11px 0 auto; height: 16px; }

.formulabar { display: flex; height: 49px; padding: 9px 10px 8px; }
.box { height: 32px; border: 1px solid #d1d1d1; border-radius: 5px; background: #fff; display: flex; align-items: center; font-size: 15px; }
.namebox { width: 127px; padding: 0 7px; }
.namebox input, .formula input { flex: 1; }
.dots { margin: 10px 11px 0; }
.fxbox { width: 92px; justify-content: space-evenly; margin-right: 5px; }
.fx { font: italic 24px/24px "Liberation Serif", serif; color: #444; }
.formula { flex: 1; padding: 0 5px 0 12px; font-size: 16px; }
.formula svg { color: #888; }

.sheetarea { flex: 1; display: flex; }
.sheet { flex: 1; border-collapse: separate; border-spacing: 0; table-layout: fixed; width: 100%; margin-right: 2px; }
.sheet th, .sheet td { padding: 0; border-right: 1px solid #dadada; border-bottom: 1px solid #dadada; background: #fff; }
.sheet tr > th:first-child { width: 50px; background: #efefef; border-right-color: #a8a8a8; font-weight: 400; font-size: 24px; line-height: 30px; vertical-align: bottom; color: #555; }
.sheet thead th { height: 34px; background: #efefef; border-bottom-color: #a8a8a8; border-right: 0; }
.sheet thead .corner { border-bottom-color: #dadada; }
.corner svg { margin: 0 0 2px 22px; }
.sheet thead .col { width: 858px; background: #e0e0e0; color: #217346; font-weight: 400; font-size: 24px; line-height: 28px; padding-top: 3px; border-bottom: 2px solid #217346; }
.tallrow { height: 126px; }
.midrow { height: 104px; }
.last { height: 48px; }
.sheet td { text-align: center; font-family: "Liberation Serif", "Noto Sans CJK SC", serif; font-size: 49px; line-height: 60px; padding-top: 9px; color: #000; }
.sheet .head { background: #ffe699; border-bottom: 2px solid #217346; border-right-color: #ffe699; }
.sheet .active { position: relative; border: 1px solid #217346; border-bottom-width: 2px; border-top: 0; font-size: 50px; }
.active::after { content: ""; position: absolute; right: -2px; bottom: -3px; width: 5px; height: 5px; background: #217346; border: 1px solid #fff; border-width: 1px 0 0 1px; }
.sheet tr > th.sel { background: #e0e0e0; color: #217346; }
.vscroll { width: 21px; margin-right: 2px; background: #f5f5f5; border-radius: 10px; display: flex; flex-direction: column; align-items: center; padding: 6px 0 3px; gap: 6px; }
.thumb { width: 11px; height: 112px; border-radius: 6px; background: #6e6e6e; }
.down { margin-top: auto; }

.tabs { height: 40px; display: flex; align-items: center; padding: 0 0 2px 15px; }
.nav { width: 41px; height: 30px; }
.sheettab { align-self: flex-start; width: 81px; height: 35px; margin-left: 44px; background: #fff; border: 1px solid #dadada; border-top: 0; border-radius: 0 0 6px 6px; font-size: 17px; padding: 0 9px; }
.sheettab span { display: block; line-height: 26px; border-bottom: 3px solid #107c41; }
.tabsep { width: 1px; height: 24px; background: #ccc; margin: 0 52px 0 5px; }
.hright { margin: 0 29px 0 auto; }
.status { height: 27px; background: #f4f4f4; border-top: 1px solid #fff; display: flex; align-items: center; padding: 0 10px 0 15px; }
.macro { margin: 0 22px 0 24px; }
.acc { margin-right: 2px; }
.zoom { margin-left: auto; display: flex; align-items: center; align-self: stretch; }
.view { width: 50px; height: 26px; display: flex; align-items: center; justify-content: center; }
.view.on { background: #dfdfdf; }
.slider { margin: 0 17px 0 8px; }
.taskbar { height: 9px; background: #ededed; display: flex; overflow: hidden; padding: 0 90px 0 60px; }
.preview { width: 361px; border: 1px solid #c8c8c8; background: #fff; display: flex; justify-content: flex-end; }
.task { width: 61px; background: #f8f8f8; margin-left: 188px; }
.clock { margin-left: auto; color: #111; padding-top: 3px; }

.dialog { position: absolute; left: 1011px; top: 255px; width: 766px; border: 1px solid #666; background: #f0f0f0; color: #000; box-shadow: 2px 5px 18px 3px #0006; }
.dtitle { height: 37px; background: #fff; display: flex; align-items: center; padding: 0 23px 0 9px; }
.help { margin: 0 47px 0 auto; font-size: 16px; }
.dbody { padding: 9px 8px 11px; }
.dtabs { display: flex; align-items: flex-end; height: 33px; }
.dtabs button { width: 71px; height: 31px; border: 1px solid #d9d9d9; border-left: 0; border-bottom: 0; padding: 0 2px; }
.dtabs .cur { width: 74px; height: 33px; border-left: 1px solid #d9d9d9; background: #fff; padding-bottom: 2px; }
.panel { height: 592px; background: #fff; border: 1px solid #d9d9d9; padding: 15px 11px 0; }
.cols { display: flex; gap: 12px; }
.lbl { display: block; line-height: 20px; }
.cat .listbox { width: 161px; height: 405px; margin-top: 4px; }
.listbox { border: 1px solid #828790; display: flex; padding: 1px; background: #fff; }
.listbox ul { flex: 1; min-width: 0; overflow: hidden; }
.listbox li { line-height: 20px; height: 20px; padding-left: 2px; white-space: pre; }
.listbox .sel { background: #0078d7; color: #fff; }
.sb { width: 20px; background: #f0f0f0; display: flex; flex-direction: column; align-items: center; justify-content: space-between; padding: 8px 0; color: #555; }
.sb.off { color: #bfbfbf; }
.up { transform: rotate(180deg); }
.detail { flex: 1; display: flex; flex-direction: column; min-width: 0; padding-top: 24px; }
fieldset { margin: 0; border: 1px solid #dcdcdc; height: 58px; padding: 10px 11px; line-height: 20px; }
legend { padding: 0 2px; margin-left: -6px; line-height: 20px; }
.detail .lbl { margin-top: 7px; }
.typebox { height: 30px; border: 1px solid #ababab; margin-top: 4px; padding: 2px 3px; display: flex; }
.typebox input { flex: 1; line-height: 20px; height: 20px; }
.formats { height: 245px; }
.sbthumb { width: 19px; height: 50px; background: #cdcdcd; margin: 6px 0 auto; }
.btn { width: 100px; height: 34px; border: 1px solid #adadad; background: #e1e1e1; }
.del { align-self: flex-end; margin-top: 21px; }
.panel p { margin: 19px 0 0; line-height: 20px; }
.actions { display: flex; justify-content: flex-end; gap: 12px; padding-top: 14px; }
.ok { border: 2px solid #0078d7; }

.note { position: absolute; left: 692px; top: 244px; font: 34px/40px "Noto Sans", "Noto Sans CJK SC", sans-serif; color: #fb3838; white-space: nowrap; }
.marks { position: absolute; left: 0; top: 0; pointer-events: none; }
.watermark { position: absolute; left: 1322px; top: 950px; font: 49px/66px "Noto Sans", "Noto Sans CJK SC", sans-serif; color: #fff; text-shadow: 3px 3px 1px #000, -1px -1px 2px #fff; white-space: nowrap; }
```
